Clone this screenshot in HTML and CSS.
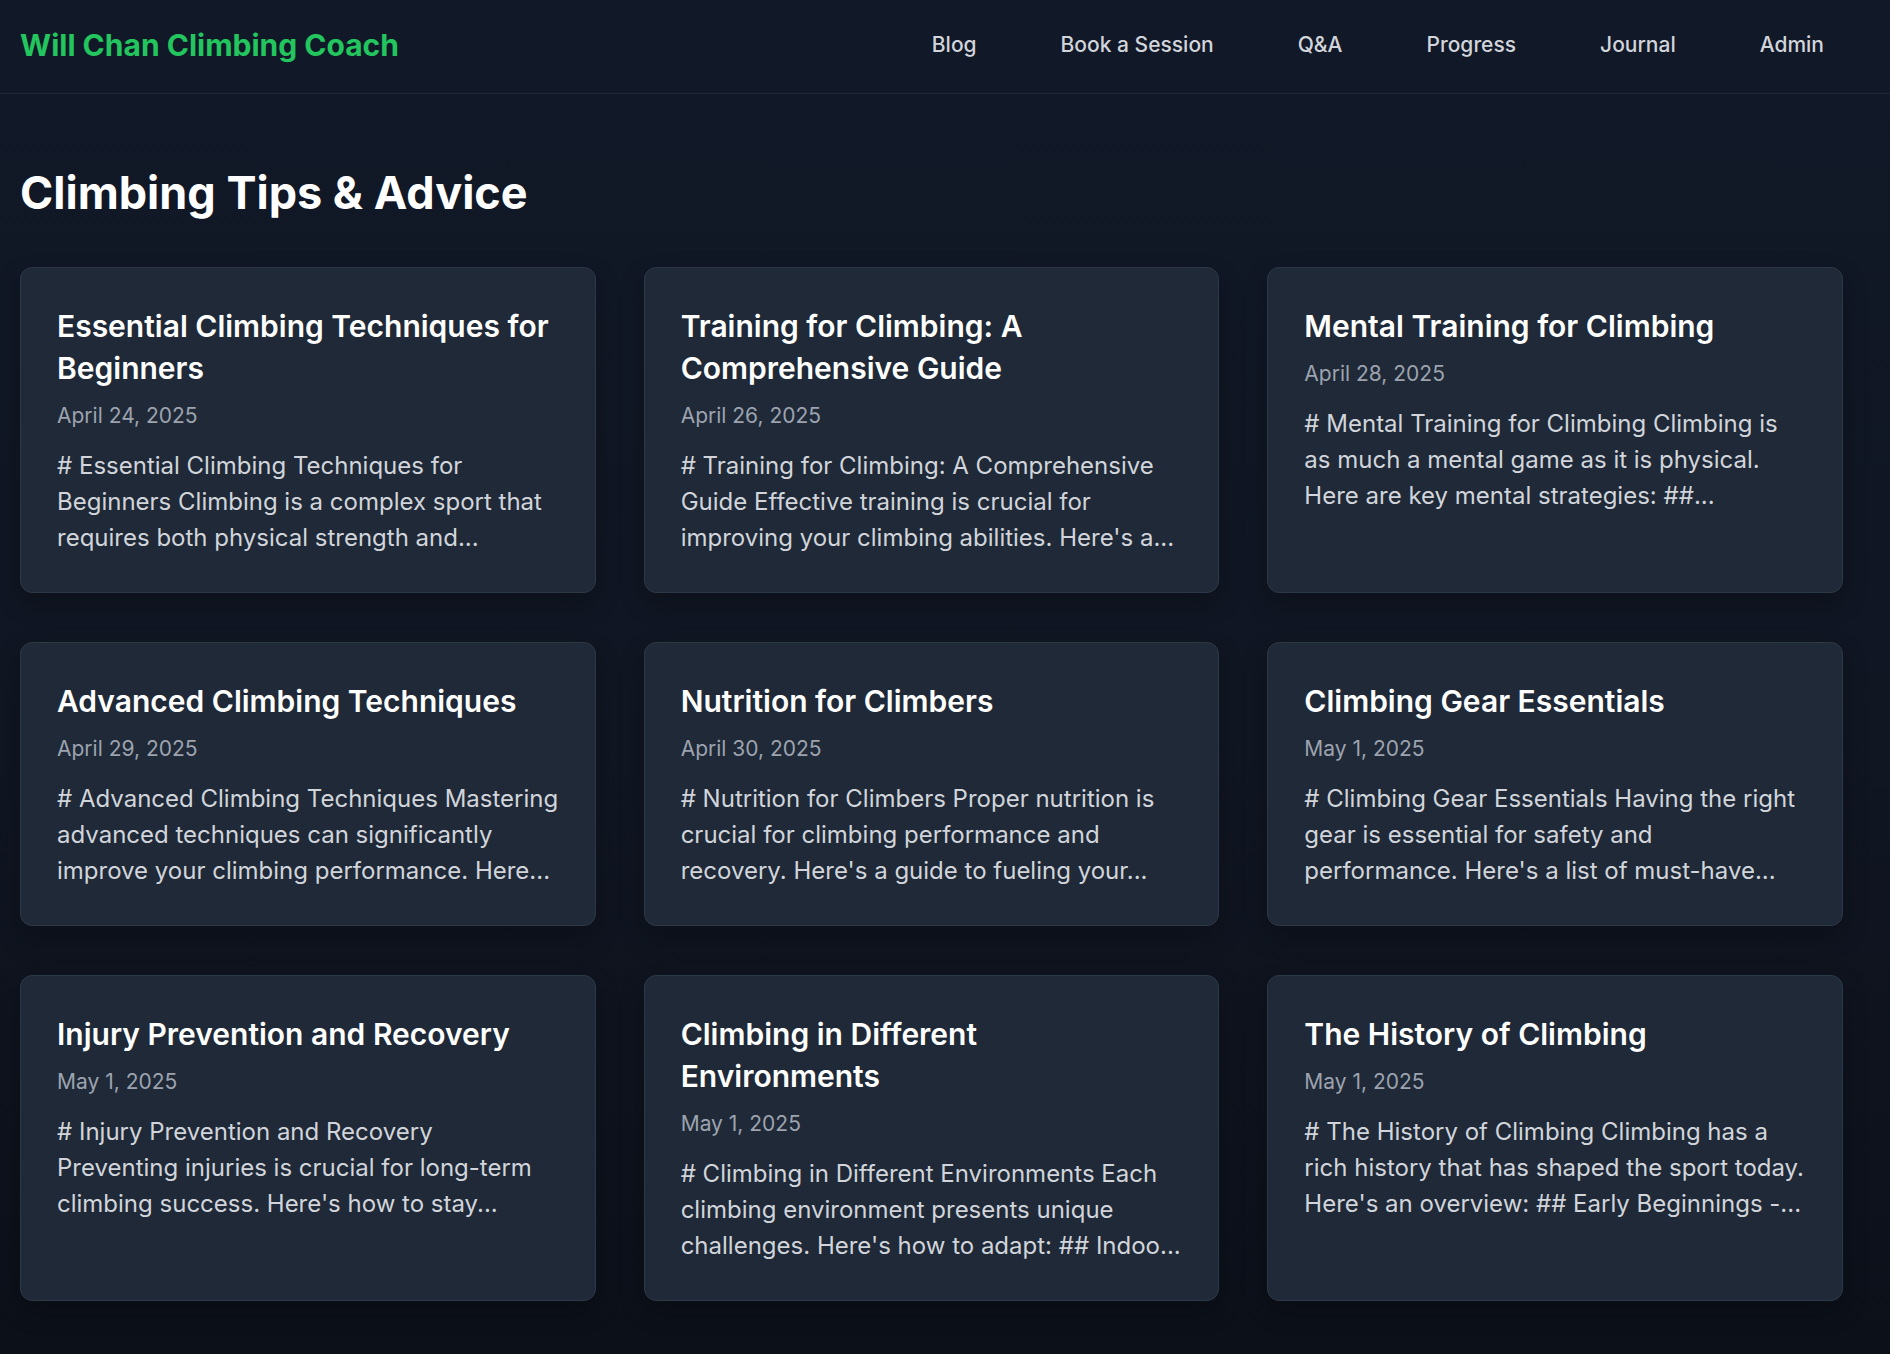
FILE: index.html
```html
<!DOCTYPE html>
<html lang="en">
<head>
<meta charset="utf-8">
<title>Will Chan Climbing Coach</title>
<link rel="stylesheet" href="styles.css">
</head>
<body>
<header class="site-header">
  <a class="logo" href="#">Will Chan Climbing Coach</a>
  <nav class="nav">
    <a href="#">Blog</a>
    <a href="#">Book a Session</a>
    <a href="#">Q&amp;A</a>
    <a href="#">Progress</a>
    <a href="#">Journal</a>
    <a href="#">Admin</a>
  </nav>
</header>
<main class="main">
  <h1 class="page-title">Climbing Tips &amp; Advice</h1>
  <div class="grid">
    <article class="card">
      <h2 class="card-title">Essential Climbing Techniques for Beginners</h2>
      <p class="card-date">April 24, 2025</p>
      <p class="card-excerpt"># Essential Climbing Techniques for Beginners Climbing is a complex sport that requires both physical strength and...</p>
    </article>
    <article class="card">
      <h2 class="card-title">Training for Climbing: A Comprehensive Guide</h2>
      <p class="card-date">April 26, 2025</p>
      <p class="card-excerpt"># Training for Climbing: A Comprehensive Guide Effective training is crucial for improving your climbing abilities. Here's a...</p>
    </article>
    <article class="card">
      <h2 class="card-title">Mental Training for Climbing</h2>
      <p class="card-date">April 28, 2025</p>
      <p class="card-excerpt"># Mental Training for Climbing Climbing is as much a mental game as it is physical. Here are key mental strategies: ##...</p>
    </article>
    <article class="card">
      <h2 class="card-title">Advanced Climbing Techniques</h2>
      <p class="card-date">April 29, 2025</p>
      <p class="card-excerpt"># Advanced Climbing Techniques Mastering advanced techniques can significantly improve your climbing performance. Here...</p>
    </article>
    <article class="card">
      <h2 class="card-title">Nutrition for Climbers</h2>
      <p class="card-date">April 30, 2025</p>
      <p class="card-excerpt"># Nutrition for Climbers Proper nutrition is crucial for climbing performance and recovery. Here's a guide to fueling your...</p>
    </article>
    <article class="card">
      <h2 class="card-title">Climbing Gear Essentials</h2>
      <p class="card-date">May 1, 2025</p>
      <p class="card-excerpt"># Climbing Gear Essentials Having the right gear is essential for safety and performance. Here's a list of must-have...</p>
    </article>
    <article class="card">
      <h2 class="card-title">Injury Prevention and Recovery</h2>
      <p class="card-date">May 1, 2025</p>
      <p class="card-excerpt"># Injury Prevention and Recovery Preventing injuries is crucial for long-term climbing success. Here's how to stay...</p>
    </article>
    <article class="card">
      <h2 class="card-title">Climbing in Different Environments</h2>
      <p class="card-date">May 1, 2025</p>
      <p class="card-excerpt"># Climbing in Different Environments Each climbing environment presents unique challenges. Here's how to adapt: ## Indoo...</p>
    </article>
    <article class="card">
      <h2 class="card-title">The History of Climbing</h2>
      <p class="card-date">May 1, 2025</p>
      <p class="card-excerpt"># The History of Climbing Climbing has a rich history that has shaped the sport today. Here's an overview: ## Early Beginnings -...</p>
    </article>
  </div>
</main>
</body>
</html>
```

FILE: styles.css
```css
* {
  box-sizing: border-box;
}

html {
  background: #0c1019;
}

body {
  margin: 0;
  min-height: 1354px;
  font-family: Inter, "Noto Sans", "Liberation Sans", sans-serif;
  color: #f3f4f6;
  background: linear-gradient(to bottom, #111827 0%, #101622 55%, #0c1019 100%);
}

a {
  text-decoration: none;
  color: inherit;
}

.site-header {
  height: 94px;
  display: flex;
  align-items: center;
  justify-content: space-between;
  padding: 0 66px 3px 20px;
  border-bottom: 1px solid #1f2937;
  background: #111827;
}

.logo {
  font-size: 30px;
  line-height: 42px;
  font-weight: 700;
  color: #22c55e;
}

.nav {
  display: flex;
  gap: 84px;
  font-size: 21px;
  line-height: 30px;
  font-weight: 500;
  color: #d1d5db;
}

.main {
  padding: 0 47px 56px 20px;
}

.page-title {
  margin: 0;
  padding: 72px 0 47px;
  font-size: 45px;
  line-height: 54px;
  font-weight: 700;
  color: #ffffff;
}

.grid {
  display: grid;
  grid-template-columns: repeat(3, 1fr);
  gap: 49px 48px;
}

.card {
  background: #1f2937;
  border: 1px solid #2d3846;
  border-radius: 12px;
  padding: 37px 36px 36px;
  box-shadow: 0 10px 24px rgba(0, 0, 0, 0.25);
}

.card-title {
  margin: 0;
  font-size: 30px;
  line-height: 42px;
  font-weight: 600;
  color: #ffffff;
}

.card-date {
  margin: 12px 0 0;
  font-size: 21px;
  line-height: 30px;
  color: #9ca3af;
}

.card-excerpt {
  margin: 17px 0 0;
  font-size: 24px;
  line-height: 36px;
  color: #d1d5db;
}
```
